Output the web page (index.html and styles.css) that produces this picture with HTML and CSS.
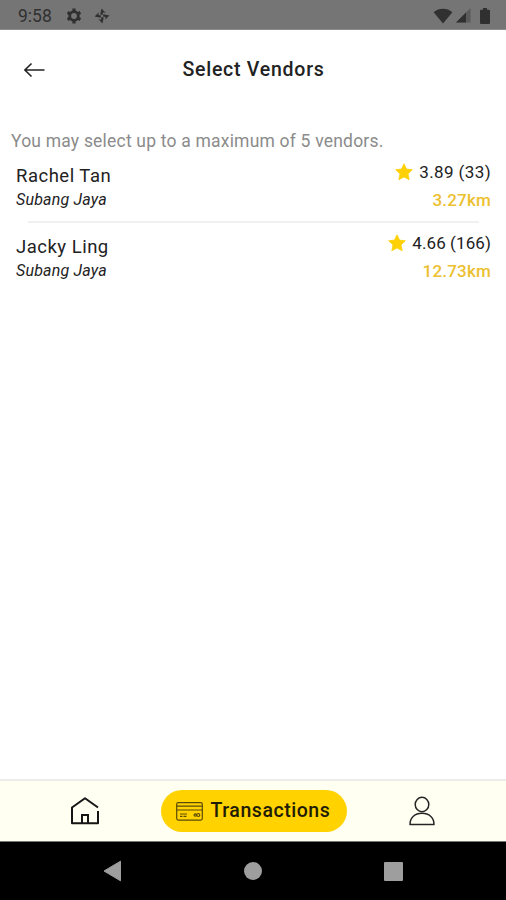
FILE: index.html
```html
<!DOCTYPE html>
<html lang="en">
<head>
  <meta charset="UTF-8">
  <meta name="viewport" content="width=device-width, initial-scale=1.0">
  <title>Select Vendors</title>
  <link rel="stylesheet" href="styles.css">
</head>
<body>
  <div class="status-bar">
    <span class="time">9:58</span>
    <svg class="gear" width="16" height="16" viewBox="0 0 16 16">
      <circle cx="8" cy="8" r="4.3" fill="none" stroke="#303030" stroke-width="2.8"/>
      <path d="M8 0.6v3M8 12.4v3M1.6 4.3l2.6 1.5M11.8 10.2l2.6 1.5M1.6 11.7l2.6-1.5M11.8 5.8l2.6-1.5" stroke="#303030" stroke-width="3.2"/>
    </svg>
    <svg class="pinwheel" width="16" height="16" viewBox="0 0 16 16">
      <g fill="#303030" transform="rotate(12 8 8)">
        <path d="M6 7V.8l5 3.400H8.300V7z"/>
        <path d="M6 7V.8l5 3.400H8.300V7z" transform="rotate(90 8 8)"/>
        <path d="M6 7V.8l5 3.400H8.300V7z" transform="rotate(180 8 8)"/>
        <path d="M6 7V.8l5 3.400H8.300V7z" transform="rotate(270 8 8)"/>
      </g>
    </svg>
    <div class="status-icons">
      <svg width="20" height="16" viewBox="0 0 20 16">
        <path d="M.6 4.2C6-.4 14-.4 19.4 4.2L10 15.4z" fill="#303030"/>
      </svg>
      <svg width="15" height="15" viewBox="0 0 15 15">
        <path d="M14.5 0v14.5H0z" fill="#5b5b5b"/>
        <path d="M10 4.5v10H0z" fill="#303030"/>
      </svg>
      <svg class="battery" width="10" height="16" viewBox="0 0 10 16">
        <path d="M3 0h4v1.8h2q1 0 1 1V15q0 1-1 1H1q-1 0-1-1V2.800q0-1 1-1h2z" fill="#303030"/>
      </svg>
    </div>
  </div>

  <header class="header">
    <svg class="back" width="22" height="16" viewBox="0 0 22 16">
      <path d="M7.500 1.500L.9 8 7.500 14.500M1 8H20.500" fill="none" stroke="#222" stroke-width="1.600"/>
    </svg>
    <h1>Select Vendors</h1>
  </header>

  <main class="content">
    <p class="note">You may select up to a maximum of 5 vendors.</p>
    <ul class="vendors">
      <li class="vendor">
        <div>
          <div class="name">Rachel Tan</div>
          <div class="place">Subang Jaya</div>
        </div>
        <div class="stats">
          <div class="rating">
            <svg width="18" height="18" viewBox="0 0 18 18">
              <path d="M9 .8l2.500 5.300 5.800.7-4.300 4 1.200 5.900L9 13.900l-5.200 2.800L5 10.800l-4.300-4 5.800-.7z" fill="#fdd007" stroke="#fdd007" stroke-width=".8" stroke-linejoin="round"/>
            </svg>
            <span>3.89 (33)</span>
          </div>
          <div class="distance">3.27km</div>
        </div>
      </li>
      <li class="vendor">
        <div>
          <div class="name">Jacky Ling</div>
          <div class="place">Subang Jaya</div>
        </div>
        <div class="stats">
          <div class="rating compact">
            <svg width="18" height="18" viewBox="0 0 18 18">
              <path d="M9 .8l2.500 5.300 5.800.7-4.300 4 1.200 5.900L9 13.900l-5.200 2.800L5 10.800l-4.300-4 5.800-.7z" fill="#fdd007" stroke="#fdd007" stroke-width=".8" stroke-linejoin="round"/>
            </svg>
            <span>4.66 (166)</span>
          </div>
          <div class="distance">12.73km</div>
        </div>
      </li>
    </ul>
  </main>

  <nav class="tab-bar">
    <a class="tab">
      <svg width="30" height="30" viewBox="0 0 30 30">
        <path d="M28 11.500L15 2.200 2 11.500V27.200H28V15" fill="none" stroke="#151515" stroke-width="2" stroke-linejoin="round"/>
        <path d="M12 27V19h6v8" fill="none" stroke="#151515" stroke-width="2"/>
      </svg>
    </a>
    <a class="tab active">
      <svg width="27" height="19" viewBox="0 0 27 19">
        <g fill="none" stroke="#5a4b08" stroke-width="1.200">
          <rect x=".7" y=".7" width="25.600" height="17.400" rx="1.500"/>
          <path d="M.7 4.200h25.600M.7 8h25.600M4 12h7M4 14.300h2.500M7.500 14.300h3"/>
          <circle cx="19.300" cy="13" r="1.200"/>
          <circle cx="22.300" cy="13" r="1.500"/>
        </g>
      </svg>
      <span>Transactions</span>
    </a>
    <a class="tab">
      <svg width="26" height="30" viewBox="0 0 26 30">
        <g fill="none" stroke="#252525" stroke-width="1.500" stroke-linejoin="round">
          <ellipse cx="13" cy="8.500" rx="6.800" ry="7.200"/>
          <path d="M1 28.500C1 21.300 6 17.300 13 17.300s12 4 12 11.200z"/>
        </g>
      </svg>
    </a>
  </nav>

  <div class="system-bar">
    <svg width="19" height="22" viewBox="0 0 19 22">
      <path d="M1 11L17.500 1.200v19.600z" fill="#9e9e9e" stroke="#9e9e9e" stroke-linejoin="round"/>
    </svg>
    <span class="home-key"></span>
    <span class="recent-key"></span>
  </div>
</body>
</html>
```
FILE: styles.css
```css
body {
  margin: 0;
  height: 900px;
  display: flex;
  flex-direction: column;
  overflow: hidden;
  background: #fff;
  color: #222;
  font-family: Roboto, "Open Sans", sans-serif;
}

svg {
  display: block;
  flex: none;
}

.status-bar {
  height: 30px;
  padding: 2px 16px 0 18px;
  box-sizing: border-box;
  display: flex;
  align-items: center;
  background: #757575;
  border-bottom: 1px solid #8c8c8c;
}

.time {
  width: 48px;
  font-size: 17.5px;
  color: #303030;
}

.pinwheel {
  margin-left: 12px;
}

.status-icons {
  display: flex;
  align-items: center;
  gap: 3px;
  margin-left: auto;
}

.battery {
  margin-left: 6px;
}

.header {
  height: 80px;
  padding: 0 23px 0 24px;
  display: grid;
  grid-template-columns: 40px 1fr 40px;
  align-items: center;
}

.header h1 {
  margin: 0;
  padding-bottom: 2px;
  font-size: 19.5px;
  font-weight: 500;
  letter-spacing: 0.75px;
  text-align: center;
  white-space: nowrap;
}

.content {
  flex: 1;
  padding-top: 20px;
}

.note {
  margin: 0 0 0 11px;
  font-size: 17.5px;
  line-height: 22px;
  letter-spacing: 0.2px;
  color: #8b8b8b;
  white-space: nowrap;
}

.vendors {
  list-style: none;
  margin: 0;
  padding: 0;
}

.vendor {
  display: flex;
  justify-content: space-between;
  height: 71px;
  padding: 12px 15px 0 16px;
  box-sizing: border-box;
}

.vendor:first-child {
  background: linear-gradient(#f0f0f0, #f0f0f0) 28px bottom / 451px 2px no-repeat;
}

.name {
  font-size: 18.5px;
  line-height: 24px;
  letter-spacing: 0.5px;
}

.place {
  font-size: 16px;
  font-style: italic;
  line-height: 23px;
  letter-spacing: 0.2px;
}

.stats {
  margin-top: -6px;
  text-align: right;
}

.rating {
  display: flex;
  align-items: center;
  justify-content: flex-end;
  gap: 6px;
  height: 28px;
  font-size: 17px;
  letter-spacing: 0.4px;
}

.rating.compact {
  letter-spacing: 0.1px;
}

.distance {
  font-size: 17px;
  font-weight: 500;
  line-height: 29px;
  letter-spacing: 0.2px;
  color: #ecc02f;
}

.tab-bar {
  height: 63px;
  box-sizing: border-box;
  padding: 0 71px 0 70px;
  display: flex;
  align-items: center;
  justify-content: space-between;
  background: #fffff2;
  border-top: 2px solid #ececea;
  border-bottom: 1px solid #777;
}

.tab.active {
  width: 186px;
  height: 42px;
  margin-right: 2px;
  padding-left: 15px;
  box-sizing: border-box;
  display: flex;
  align-items: center;
  gap: 8px;
  border-radius: 21px;
  background: #ffd200;
  color: #211c05;
  font-size: 19.5px;
  font-weight: 500;
  letter-spacing: 0.55px;
}

.tab.active span {
  padding-bottom: 1px;
}

.system-bar {
  height: 58px;
  padding: 0 103px;
  box-sizing: border-box;
  display: flex;
  align-items: center;
  justify-content: space-between;
  background: #000;
}

.home-key {
  width: 18px;
  height: 18px;
  border-radius: 50%;
  background: #9e9e9e;
}

.recent-key {
  width: 19px;
  height: 19px;
  border-radius: 1px;
  background: #9e9e9e;
}
```
